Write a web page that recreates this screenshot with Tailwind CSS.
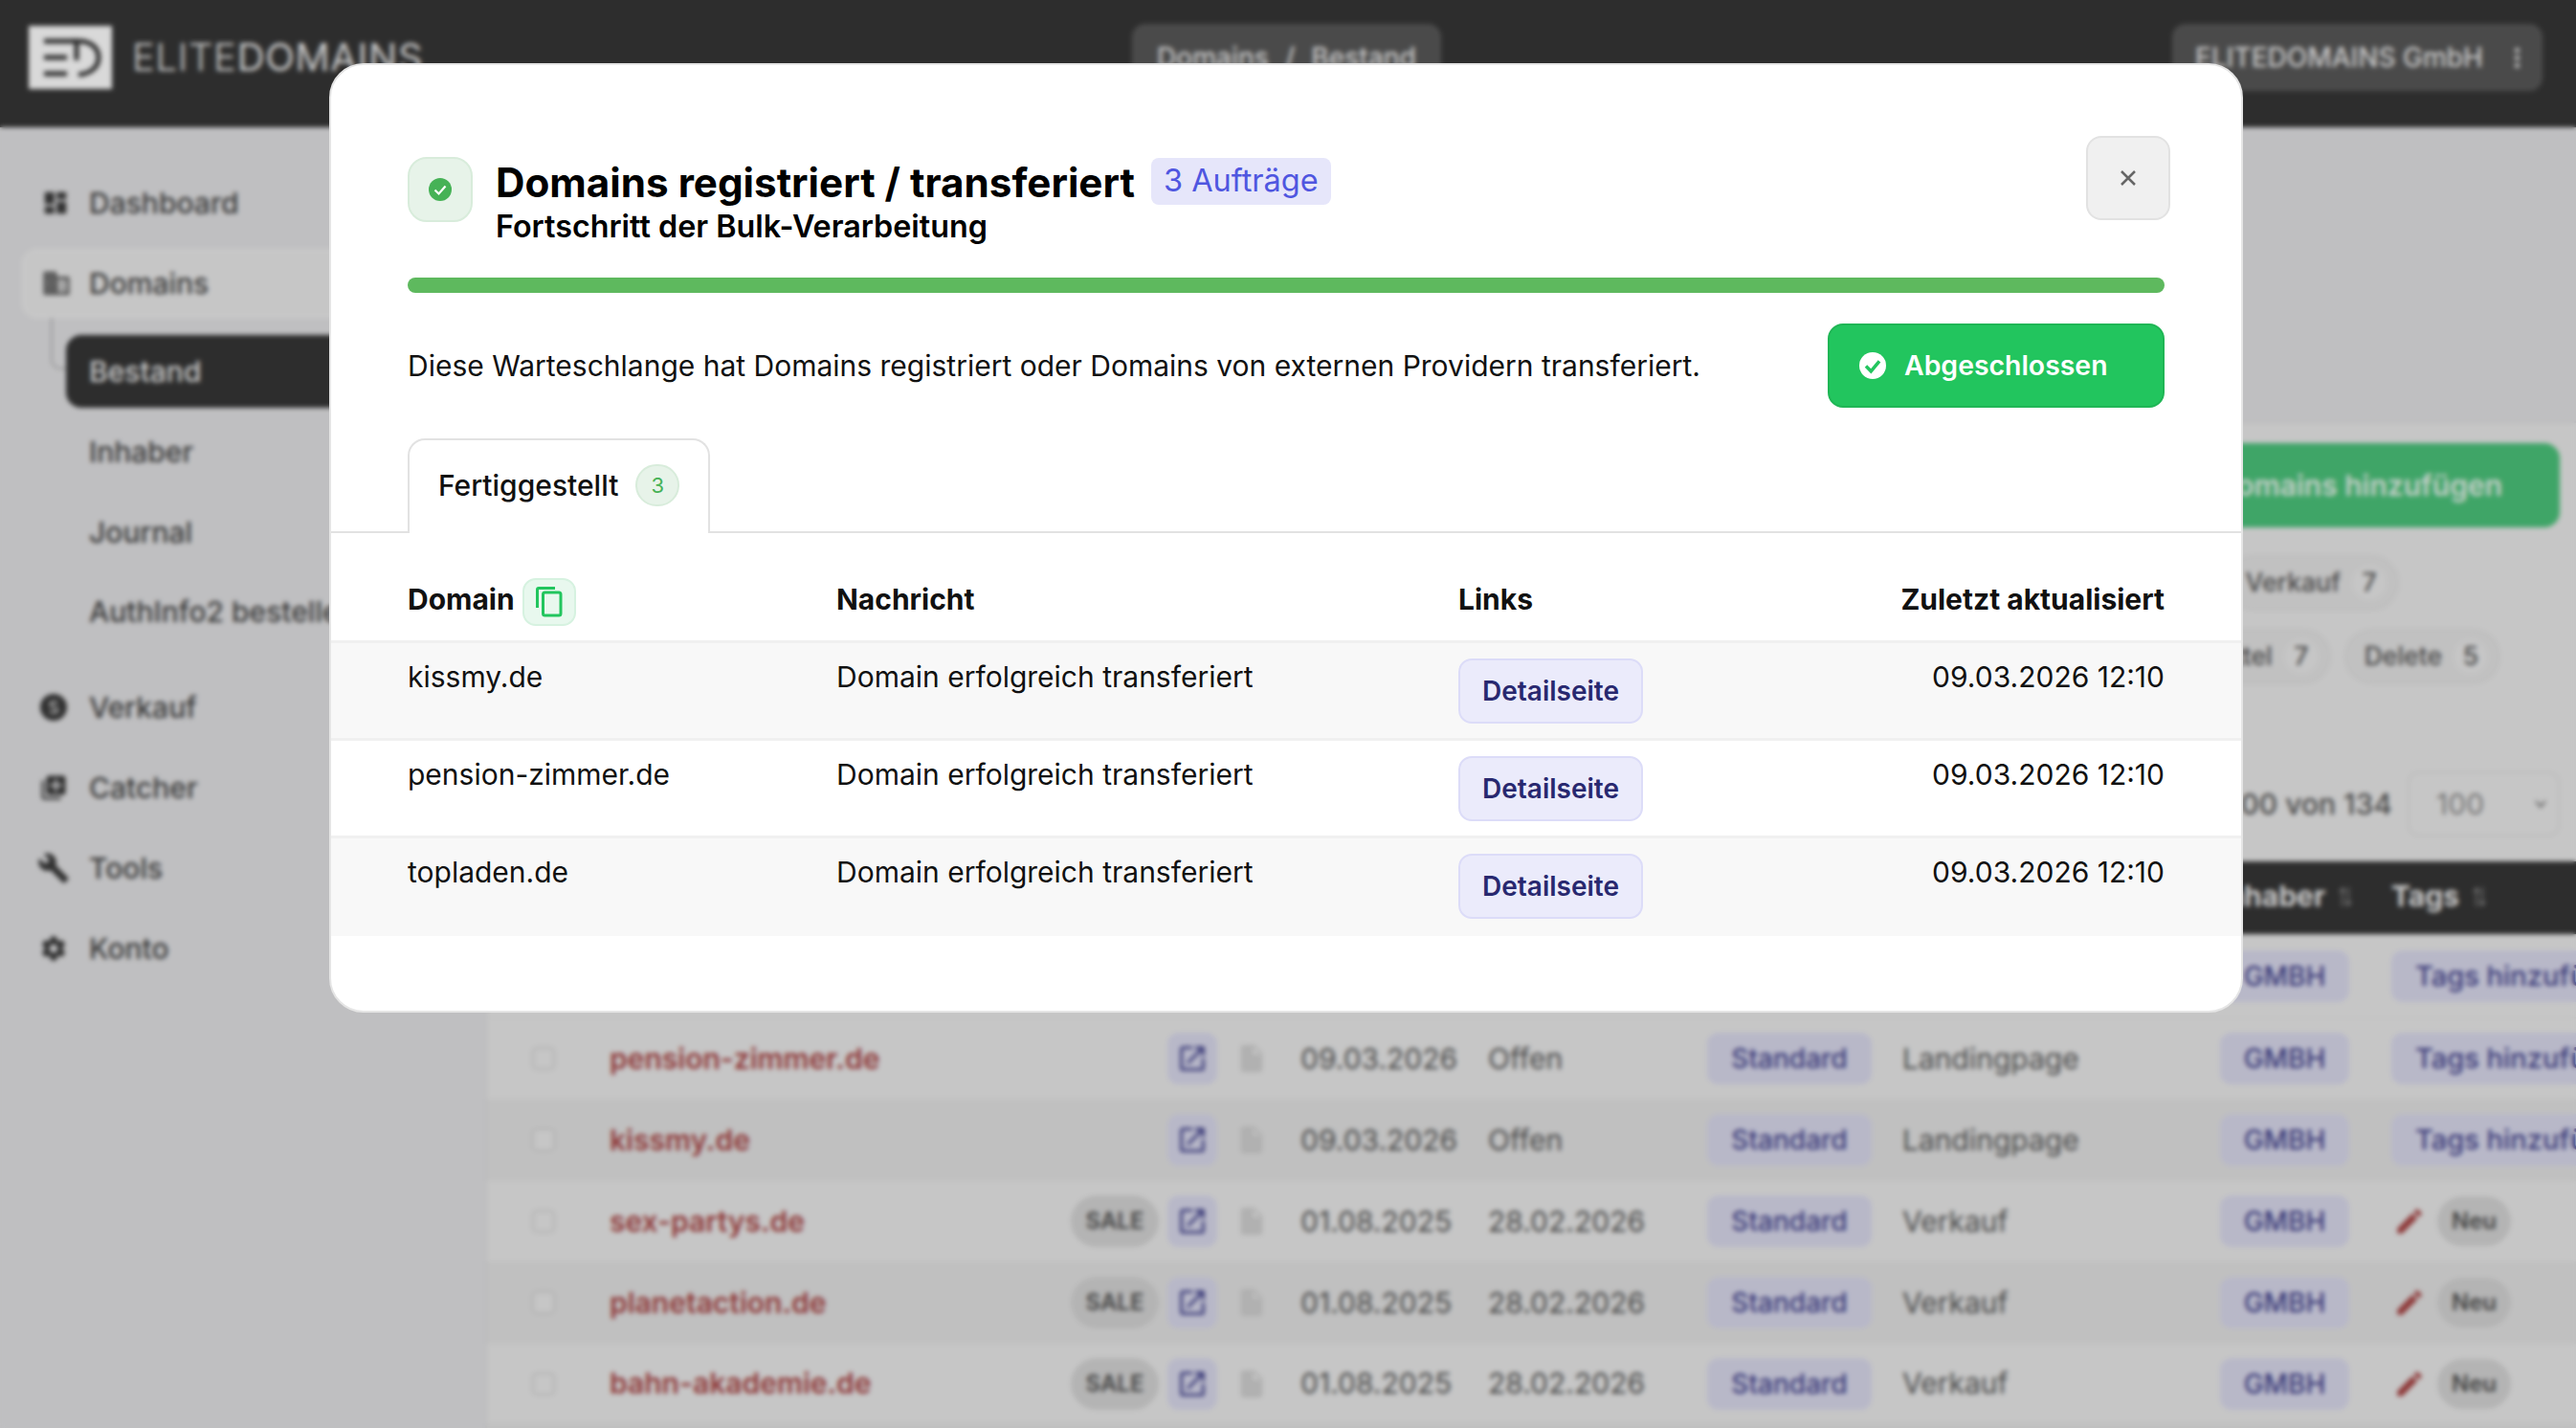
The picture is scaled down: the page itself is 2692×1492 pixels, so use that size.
<!DOCTYPE html>
<html lang="de">
  <head>
    <meta charset="UTF-8" />
    <meta name="viewport" content="width=device-width, initial-scale=1.0" />
    <script src="https://cdn.jsdelivr.net/npm/@tailwindcss/browser@4"></script>
    <title>Domains Bestand</title>
  </head>
  <body class="h-[1492px] overflow-hidden bg-[#e1e1e3] font-[Inter,sans-serif] text-[#111]">
    <!-- Kopfzeile -->
    <header class="flex h-[133px] items-center bg-[#363636] pr-[35px] pb-[13px] pl-[30px]">
      <a href="#" class="flex w-[1153px] items-center gap-[21px]">
        <svg class="h-[66px] w-[87px]" viewBox="0 0 87 66">
          <rect width="87" height="66" fill="#ffffff" />
          <path d="M16 16H50M16 33H40M16 50H40" stroke="#363636" stroke-width="5" fill="none" />
          <path d="M46 16H52C66 16 73 24 73 33C73 42 66 50 52 51M50 16V36" stroke="#363636" stroke-width="5" fill="none" />
        </svg>
        <span class="text-[40px] leading-none tracking-[0.7px] text-[#ececec]"><span class="font-light">ELITE</span><span class="font-normal">DOMAINS</span></span>
      </a>
      <div class="flex h-[70px] w-[323px] items-center justify-center gap-[17px] rounded-[14px] bg-[#585858] text-[28px] font-medium text-[#ebebeb]"><span>Domains</span><span>/</span><span>Bestand</span></div>
      <div class="ml-auto flex h-[70px] w-[387px] items-center justify-between rounded-[14px] bg-[#585858] pr-[24px] pl-[24px] text-[28px] font-medium text-[#ebebeb]">
        ELITEDOMAINS GmbH
        <span class="flex flex-col gap-[3px]">
          <i class="block size-[5px] rounded-full bg-[#ebebeb]"></i>
          <i class="block size-[5px] rounded-full bg-[#ebebeb]"></i>
          <i class="block size-[5px] rounded-full bg-[#ebebeb]"></i>
        </span>
      </div>
    </header>

    <div class="flex h-[1359px]">
      <!-- Seitenleiste -->
      <aside class="w-[509px] shrink-0 border-r-2 border-[#dcdcde] pt-[56px] pl-[23px] text-[30px] font-medium text-[#444]">
        <a class="flex h-[46px] items-center gap-[20px] pl-[20px]">
          <svg class="size-[30px] fill-[#3a3a3a]" viewBox="0 0 24 24"><path d="M13,3V9H21V3M13,21H21V11H13M3,21H11V15H3M3,13H11V3H3V13Z" /></svg>
          Dashboard
        </a>
        <a class="mt-[25px] flex h-[72px] items-center gap-[18px] rounded-[16px] border-2 border-[#efefef] bg-[#e9e9e9] pl-[18px]">
          <svg class="size-[32px] fill-[#4a4a4a]" viewBox="0 0 24 24"><path d="M18,15H16V17H18M18,11H16V13H18M20,19H12V17H14V15H12V13H14V11H12V9H20M10,7H8V5H10M10,11H8V9H10M10,15H8V13H10M10,19H8V17H10M6,7H4V5H6M6,11H4V9H6M6,15H4V13H6M6,19H4V17H6M12,7V3H2V21H22V7H12Z" /></svg>
          Domains
        </a>
        <div class="relative mt-[18px] ml-[46px]">
          <span class="absolute top-[-18px] left-[-16px] h-[54px] w-[16px] rounded-bl-[10px] border-b-2 border-l-2 border-[#b5b5b7]"></span>
          <a class="flex h-[76px] items-center rounded-[16px] bg-[#363636] pl-[24px] text-[#ebebeb]">Bestand</a>
          <a class="mt-[22px] block h-[48px] pl-[24px] leading-[48px]">Inhaber</a>
          <a class="mt-[36px] block h-[48px] pl-[24px] leading-[48px]">Journal</a>
          <a class="mt-[35px] block h-[48px] pl-[24px] whitespace-nowrap leading-[48px]">AuthInfo2 bestellen</a>
        </div>
        <a class="mt-[52px] flex h-[48px] items-center gap-[23px] pl-[19px]">
          <svg class="size-[28px]" viewBox="0 0 24 24"><circle cx="12" cy="12" r="12" fill="#3a3a3a" /><path d="M15.500 8.500C14.500 7 9 6.500 9 9.500C9 12.500 15.500 11.500 15.500 14.500C15.500 17.500 10 17 8.500 15.500" fill="none" stroke="#c4c4c4" stroke-width="2" /></svg>
          Verkauf
        </a>
        <a class="mt-[36px] flex h-[48px] items-center gap-[22px] pl-[18px]">
          <svg class="size-[30px] fill-[#3a3a3a]" viewBox="0 0 24 24"><path d="M4 6H2v14c0 1.100.9 2 2 2h14v-2H4V6zm16-4H8c-1.100 0-2 .9-2 2v12c0 1.100.9 2 2 2h12c1.100 0 2-.9 2-2V4c0-1.100-.9-2-2-2zm-1 9h-4v4h-2v-4H9V9h4V5h2v4h4v2z" /></svg>
          Catcher
        </a>
        <a class="mt-[36px] flex h-[48px] items-center gap-[20px] pl-[16px]">
          <svg class="size-[34px] fill-[#3a3a3a]" viewBox="0 0 24 24"><path d="M22.700 19l-9.100-9.100c.9-2.300.4-5-1.500-6.900-2-2-5-2.400-7.400-1.300L9 6 6 9 1.600 4.700C.4 7.100.9 10.100 2.900 12.100c1.900 1.900 4.600 2.400 6.900 1.500l9.100 9.100c.4.4 1 .4 1.400 0l2.300-2.300c.5-.4.5-1.100.1-1.400z" /></svg>
          Tools
        </a>
        <a class="mt-[36px] flex h-[48px] items-center gap-[22px] pl-[18px]">
          <svg class="size-[30px] fill-[#3a3a3a]" viewBox="0 0 24 24"><path d="M12,15.500A3.500,3.500 0 0,1 8.500,12A3.500,3.500 0 0,1 12,8.500A3.500,3.500 0 0,1 15.500,12A3.500,3.500 0 0,1 12,15.500M19.430,12.970C19.470,12.650 19.500,12.330 19.500,12C19.500,11.670 19.470,11.340 19.430,11L21.540,9.370C21.730,9.220 21.780,8.950 21.660,8.730L19.660,5.270C19.540,5.050 19.270,4.960 19.050,5.050L16.560,6.050C16.040,5.660 15.500,5.320 14.870,5.070L14.500,2.420C14.460,2.180 14.250,2 14,2H10C9.750,2 9.540,2.180 9.500,2.420L9.130,5.070C8.500,5.320 7.960,5.660 7.440,6.050L4.950,5.050C4.730,4.960 4.460,5.050 4.340,5.270L2.340,8.730C2.210,8.950 2.270,9.220 2.460,9.370L4.570,11C4.530,11.340 4.500,11.670 4.500,12C4.500,12.330 4.530,12.650 4.570,12.970L2.460,14.630C2.270,14.780 2.210,15.050 2.340,15.270L4.340,18.730C4.460,18.950 4.730,19.030 4.950,18.950L7.440,17.940C7.960,18.340 8.500,18.680 9.130,18.930L9.500,21.580C9.540,21.820 9.750,22 10,22H14C14.250,22 14.460,21.820 14.500,21.580L14.870,18.930C15.500,18.670 16.040,18.340 16.560,17.940L19.050,18.950C19.270,19.030 19.540,18.950 19.660,18.730L21.660,15.270C21.780,15.050 21.730,14.780 21.540,14.630L19.430,12.970Z" /></svg>
          Konto
        </a>
      </aside>

      <!-- Inhalt -->
      <main class="flex min-w-0 flex-1 flex-col pt-[307px]">
        <div class="flex flex-1 flex-col border-t-2 border-[#dcdcde] bg-[#e9e9e9] text-[30px]">
          <div class="flex flex-col items-end pt-[21px] pr-[17px]">
            <button class="flex h-[88px] w-[520px] items-center justify-end rounded-[16px] bg-[#4bc27a] pr-[60px] text-[30px] font-semibold text-[#eaf5ee]">Domains hinzufügen</button>
            <div class="mt-[29px] mr-[168px] flex h-[58px] items-center gap-[12px] rounded-full border-2 border-[#dedede] bg-[#e3e3e3] pr-[11px] pl-[19px] text-[26.500px] font-medium text-[#555]">
              Verkauf <span class="flex size-[36px] items-center justify-center rounded-full bg-[#e9e9e9]">7</span>
            </div>
            <div class="mt-[19px] mr-[62px] flex items-center gap-[14px] text-[26.500px] font-medium text-[#555]">
              <div class="flex h-[58px] items-center gap-[12px] rounded-full border-2 border-[#dedede] bg-[#e3e3e3] pr-[11px] pl-[19px]">
                Mittel <span class="flex size-[36px] items-center justify-center rounded-full bg-[#e9e9e9]">7</span>
              </div>
              <div class="flex h-[58px] items-center gap-[12px] rounded-full border-2 border-[#dedede] bg-[#e3e3e3] pr-[11px] pl-[19px]">
                Delete <span class="flex size-[36px] items-center justify-center rounded-full bg-[#e9e9e9]">5</span>
              </div>
            </div>
            <div class="mt-[91px] flex items-center gap-[16px] text-[#555]">
              <span class="font-medium">1 - 100 von 134</span>
              <div class="flex h-[68px] w-[159px] items-center justify-between rounded-[12px] border-2 border-[#dedede] pr-[8px] pl-[28px] text-[#888]">
                100
                <svg class="size-[20px]" viewBox="0 0 20 20"><path d="M5 7l5 6 5-6" fill="none" stroke="#777" stroke-width="2" /></svg>
              </div>
            </div>
          </div>

          <!-- Tabellenkopf -->
          <div class="mt-[26px] grid h-[76px] grid-cols-[47px_81px_583px_77px_61px_197px_229px_204px_332px_179px_1fr] items-center bg-[#363636] pb-[3px] text-[30px] font-bold text-[#ebebeb]">
            <span></span><span></span><span></span><span></span><span></span><span></span><span></span><span></span><span></span>
            <span class="-ml-[2px] flex items-center gap-[14px]">Inhaber
              <svg class="h-[24px] w-[14px]" viewBox="0 0 14 24"><path d="M4 22V4M1 7l3-4 3 4M10 2v18M7 17l3 4 3-4" fill="none" stroke="#8a8a8a" stroke-width="1.500" /></svg>
            </span>
            <span class="flex items-center gap-[14px]">Tags
              <svg class="h-[24px] w-[14px]" viewBox="0 0 14 24"><path d="M4 22V4M1 7l3-4 3 4M10 2v18M7 17l3 4 3-4" fill="none" stroke="#8a8a8a" stroke-width="1.500" /></svg>
            </span>
          </div>

          <div class="grid h-[87px] grid-cols-[47px_81px_583px_77px_61px_197px_229px_204px_332px_179px_1fr] items-center overflow-hidden">
            <span></span><span></span><span></span><span></span><span></span><span></span><span></span><span></span>
            <span></span>
            <span class="flex h-[54px] w-[135px] items-center justify-center rounded-[12px] bg-[#d9d9ec] text-[28px] font-medium text-[#42428c]">GMBH</span>
            <span class="flex h-[54px] items-center rounded-l-[12px] bg-[#d9d9ec] pl-[25px] text-[29px] font-medium whitespace-nowrap text-[#42428c]">Tags hinzufügen</span>
          </div>

          <div class="grid h-[85px] grid-cols-[47px_81px_583px_77px_61px_197px_229px_204px_332px_179px_1fr] items-center overflow-hidden border-t border-[#e2e2e2]">
            <span></span>
            <span class="size-[24px] rounded-[5px] border-2 border-[#d2d2d2] bg-[#e9e9e9]"></span>
            <a class="font-semibold text-[#a84444]">pension-zimmer.de</a>
            <span class="flex h-[54px] w-[52px] items-center justify-center rounded-[12px] bg-[#d9d9ec]"><svg class="size-[34px] fill-[#42428c]" viewBox="0 0 24 24"><path d="M14,3V5H17.590L7.760,14.830L9.170,16.240L19,6.410V10H21V3M19,19H5V5H12V3H5C3.890,3 3,3.900 3,5V19A2,2 0 0,0 5,21H19A2,2 0 0,0 21,19V12H19V19Z" /></svg></span>
            <svg class="-ml-[6px] size-[34px] fill-[#d0d0d0]" viewBox="0 0 24 24"><path d="M13,9V3.500L18.500,9M6,2C4.890,2 4,2.890 4,4V20A2,2 0 0,0 6,22H18A2,2 0 0,0 20,20V8L14,2H6Z" /></svg>
            <span class="pl-[1px] text-[#555]">09.03.2026</span>
            <span class="text-[#555]">Offen</span>
            <span class="flex h-[54px] w-[172px] items-center justify-center rounded-[12px] bg-[#d9d9ec] text-[28px] font-medium text-[#42428c]">Standard</span>
            <span class="text-[#555]">Landingpage</span>
            <span class="flex h-[54px] w-[135px] items-center justify-center rounded-[12px] bg-[#d9d9ec] text-[28px] font-medium text-[#42428c]">GMBH</span>
            <span class="flex h-[54px] items-center rounded-l-[12px] bg-[#d9d9ec] pl-[25px] text-[29px] font-medium whitespace-nowrap text-[#42428c]">Tags hinzufügen</span>
          </div>

          <div class="grid h-[85px] grid-cols-[47px_81px_583px_77px_61px_197px_229px_204px_332px_179px_1fr] items-center overflow-hidden border-t border-[#e2e2e2] bg-[#e2e2e2]">
            <span></span>
            <span class="size-[24px] rounded-[5px] border-2 border-[#d2d2d2] bg-[#e9e9e9]"></span>
            <a class="font-semibold text-[#a84444]">kissmy.de</a>
            <span class="flex h-[54px] w-[52px] items-center justify-center rounded-[12px] bg-[#d9d9ec]"><svg class="size-[34px] fill-[#42428c]" viewBox="0 0 24 24"><path d="M14,3V5H17.590L7.760,14.830L9.170,16.240L19,6.410V10H21V3M19,19H5V5H12V3H5C3.890,3 3,3.900 3,5V19A2,2 0 0,0 5,21H19A2,2 0 0,0 21,19V12H19V19Z" /></svg></span>
            <svg class="-ml-[6px] size-[34px] fill-[#d0d0d0]" viewBox="0 0 24 24"><path d="M13,9V3.500L18.500,9M6,2C4.890,2 4,2.890 4,4V20A2,2 0 0,0 6,22H18A2,2 0 0,0 20,20V8L14,2H6Z" /></svg>
            <span class="pl-[1px] text-[#555]">09.03.2026</span>
            <span class="text-[#555]">Offen</span>
            <span class="flex h-[54px] w-[172px] items-center justify-center rounded-[12px] bg-[#d9d9ec] text-[28px] font-medium text-[#42428c]">Standard</span>
            <span class="text-[#555]">Landingpage</span>
            <span class="flex h-[54px] w-[135px] items-center justify-center rounded-[12px] bg-[#d9d9ec] text-[28px] font-medium text-[#42428c]">GMBH</span>
            <span class="flex h-[54px] items-center rounded-l-[12px] bg-[#d9d9ec] pl-[25px] text-[29px] font-medium whitespace-nowrap text-[#42428c]">Tags hinzufügen</span>
          </div>

          <div class="grid h-[85px] grid-cols-[47px_81px_583px_77px_61px_197px_229px_204px_332px_179px_1fr] items-center overflow-hidden border-t border-[#e2e2e2]">
            <span></span>
            <span class="size-[24px] rounded-[5px] border-2 border-[#d2d2d2] bg-[#e9e9e9]"></span>
            <span class="flex items-center justify-between pr-[9px]">
              <a class="font-semibold text-[#a84444]">sex-partys.de</a>
              <span class="flex h-[54px] w-[92px] items-center justify-center rounded-full bg-[#d4d4d4] text-[24px] font-semibold text-[#4f4f4f]">SALE</span>
            </span>
            <span class="flex h-[54px] w-[52px] items-center justify-center rounded-[12px] bg-[#d9d9ec]"><svg class="size-[34px] fill-[#42428c]" viewBox="0 0 24 24"><path d="M14,3V5H17.590L7.760,14.830L9.170,16.240L19,6.410V10H21V3M19,19H5V5H12V3H5C3.890,3 3,3.900 3,5V19A2,2 0 0,0 5,21H19A2,2 0 0,0 21,19V12H19V19Z" /></svg></span>
            <svg class="-ml-[6px] size-[34px] fill-[#d0d0d0]" viewBox="0 0 24 24"><path d="M13,9V3.500L18.500,9M6,2C4.890,2 4,2.890 4,4V20A2,2 0 0,0 6,22H18A2,2 0 0,0 20,20V8L14,2H6Z" /></svg>
            <span class="pl-[1px] text-[#555]">01.08.2025</span>
            <span class="text-[#555]">28.02.2026</span>
            <span class="flex h-[54px] w-[172px] items-center justify-center rounded-[12px] bg-[#d9d9ec] text-[28px] font-medium text-[#42428c]">Standard</span>
            <span class="text-[#555]">Verkauf</span>
            <span class="flex h-[54px] w-[135px] items-center justify-center rounded-[12px] bg-[#d9d9ec] text-[28px] font-medium text-[#42428c]">GMBH</span>
            <span class="flex items-center gap-[12px] pl-[2px]">
              <svg class="size-[34px] fill-[#a84444]" viewBox="0 0 24 24"><path d="M20.710,7.040C21.100,6.650 21.100,6 20.710,5.630L18.370,3.290C18,2.900 17.350,2.900 16.960,3.290L15.120,5.120L18.870,8.870M3,17.250V21H6.750L17.810,9.930L14.060,6.180L3,17.250Z" /></svg>
              <span class="flex h-[52px] w-[77px] items-center justify-center rounded-full bg-[#d4d4d4] text-[24px] font-semibold text-[#4f4f4f]">Neu</span>
            </span>
          </div>

          <div class="grid h-[85px] grid-cols-[47px_81px_583px_77px_61px_197px_229px_204px_332px_179px_1fr] items-center overflow-hidden border-t border-[#e2e2e2] bg-[#e2e2e2]">
            <span></span>
            <span class="size-[24px] rounded-[5px] border-2 border-[#d2d2d2] bg-[#e9e9e9]"></span>
            <span class="flex items-center justify-between pr-[9px]">
              <a class="font-semibold text-[#a84444]">planetaction.de</a>
              <span class="flex h-[54px] w-[92px] items-center justify-center rounded-full bg-[#d4d4d4] text-[24px] font-semibold text-[#4f4f4f]">SALE</span>
            </span>
            <span class="flex h-[54px] w-[52px] items-center justify-center rounded-[12px] bg-[#d9d9ec]"><svg class="size-[34px] fill-[#42428c]" viewBox="0 0 24 24"><path d="M14,3V5H17.590L7.760,14.830L9.170,16.240L19,6.410V10H21V3M19,19H5V5H12V3H5C3.890,3 3,3.900 3,5V19A2,2 0 0,0 5,21H19A2,2 0 0,0 21,19V12H19V19Z" /></svg></span>
            <svg class="-ml-[6px] size-[34px] fill-[#d0d0d0]" viewBox="0 0 24 24"><path d="M13,9V3.500L18.500,9M6,2C4.890,2 4,2.890 4,4V20A2,2 0 0,0 6,22H18A2,2 0 0,0 20,20V8L14,2H6Z" /></svg>
            <span class="pl-[1px] text-[#555]">01.08.2025</span>
            <span class="text-[#555]">28.02.2026</span>
            <span class="flex h-[54px] w-[172px] items-center justify-center rounded-[12px] bg-[#d9d9ec] text-[28px] font-medium text-[#42428c]">Standard</span>
            <span class="text-[#555]">Verkauf</span>
            <span class="flex h-[54px] w-[135px] items-center justify-center rounded-[12px] bg-[#d9d9ec] text-[28px] font-medium text-[#42428c]">GMBH</span>
            <span class="flex items-center gap-[12px] pl-[2px]">
              <svg class="size-[34px] fill-[#a84444]" viewBox="0 0 24 24"><path d="M20.710,7.040C21.100,6.650 21.100,6 20.710,5.630L18.370,3.290C18,2.900 17.350,2.900 16.960,3.290L15.120,5.120L18.870,8.870M3,17.250V21H6.750L17.810,9.930L14.060,6.180L3,17.250Z" /></svg>
              <span class="flex h-[52px] w-[77px] items-center justify-center rounded-full bg-[#d4d4d4] text-[24px] font-semibold text-[#4f4f4f]">Neu</span>
            </span>
          </div>

          <div class="grid h-[84px] grid-cols-[47px_81px_583px_77px_61px_197px_229px_204px_332px_179px_1fr] items-center overflow-hidden border-t border-[#e2e2e2]">
            <span></span>
            <span class="size-[24px] rounded-[5px] border-2 border-[#d2d2d2] bg-[#e9e9e9]"></span>
            <span class="flex items-center justify-between pr-[9px]">
              <a class="font-semibold text-[#a84444]">bahn-akademie.de</a>
              <span class="flex h-[54px] w-[92px] items-center justify-center rounded-full bg-[#d4d4d4] text-[24px] font-semibold text-[#4f4f4f]">SALE</span>
            </span>
            <span class="flex h-[54px] w-[52px] items-center justify-center rounded-[12px] bg-[#d9d9ec]"><svg class="size-[34px] fill-[#42428c]" viewBox="0 0 24 24"><path d="M14,3V5H17.590L7.760,14.830L9.170,16.240L19,6.410V10H21V3M19,19H5V5H12V3H5C3.890,3 3,3.900 3,5V19A2,2 0 0,0 5,21H19A2,2 0 0,0 21,19V12H19V19Z" /></svg></span>
            <svg class="-ml-[6px] size-[34px] fill-[#d0d0d0]" viewBox="0 0 24 24"><path d="M13,9V3.500L18.500,9M6,2C4.890,2 4,2.890 4,4V20A2,2 0 0,0 6,22H18A2,2 0 0,0 20,20V8L14,2H6Z" /></svg>
            <span class="pl-[1px] text-[#555]">01.08.2025</span>
            <span class="text-[#555]">28.02.2026</span>
            <span class="flex h-[54px] w-[172px] items-center justify-center rounded-[12px] bg-[#d9d9ec] text-[28px] font-medium text-[#42428c]">Standard</span>
            <span class="text-[#555]">Verkauf</span>
            <span class="flex h-[54px] w-[135px] items-center justify-center rounded-[12px] bg-[#d9d9ec] text-[28px] font-medium text-[#42428c]">GMBH</span>
            <span class="flex items-center gap-[12px] pl-[2px]">
              <svg class="size-[34px] fill-[#a84444]" viewBox="0 0 24 24"><path d="M20.710,7.040C21.100,6.650 21.100,6 20.710,5.630L18.370,3.290C18,2.900 17.350,2.900 16.960,3.290L15.120,5.120L18.870,8.870M3,17.250V21H6.750L17.810,9.930L14.060,6.180L3,17.250Z" /></svg>
              <span class="flex h-[52px] w-[77px] items-center justify-center rounded-full bg-[#d4d4d4] text-[24px] font-semibold text-[#4f4f4f]">Neu</span>
            </span>
          </div>

          <div class="flex-1 border-t border-[#e2e2e2] bg-[#e2e2e2]"></div>
        </div>
      </main>
    </div>

    <!-- Dialog -->
    <div class="fixed inset-0 flex items-start justify-center bg-black/15 pt-[66px] pr-[4px] backdrop-blur-[2.5px]">
      <div class="h-[992px] w-[2000px] overflow-hidden rounded-[36px] border-2 border-[#e5e5e5] bg-white">
        <div class="px-[80px] pt-[74px]">
          <div class="flex h-[88px] items-start justify-between">
            <div class="mt-[22px] flex gap-[24px]">
              <span class="flex size-[68px] items-center justify-center rounded-[20px] border-2 border-[#d8ecdb] bg-[#e7f3e9]">
                <svg class="size-[24px]" viewBox="0 0 24 24"><circle cx="12" cy="12" r="12" fill="#46b256" /><path d="M6.500 12.500L10.500 16.500L17.500 8.500" fill="none" stroke="#fff" stroke-width="2.200" /></svg>
              </span>
              <div class="-mt-[1px]">
                <div class="flex items-center gap-[17px]">
                  <h1 class="text-[42.200px] leading-[56px] font-bold text-black">Domains registriert / transferiert</h1>
                  <span class="mb-[4px] flex h-[49px] items-center rounded-[8px] bg-[#e6e6fa] px-[13px] text-[32.500px] text-[#4f56e0]">3 Aufträge</span>
                </div>
                <p class="text-[32.300px] leading-[36px] font-semibold text-black">Fortschritt der Bulk-Verarbeitung</p>
              </div>
            </div>
            <button class="-mr-[6px] flex size-[88px] items-center justify-center rounded-[16px] border-2 border-[#e2e2e2] bg-[#f0f0f0]">
              <svg class="size-[18px]" viewBox="0 0 18 18"><path d="M2 2L16 16M16 2L2 16" stroke="#666" stroke-width="2.500" /></svg>
            </button>
          </div>

          <div class="mt-[60px] h-[16px] rounded-[8px] bg-[#5eb95e]"></div>

          <div class="mt-[32px] flex items-center justify-between">
            <p class="text-[30px]">Diese Warteschlange hat Domains registriert oder Domains von externen Providern transferiert.</p>
            <span class="flex h-[88px] w-[352px] items-center gap-[19px] rounded-[16px] border-2 border-[#1fb655] bg-[#22c55e] pl-[31px] text-[28.400px] font-semibold text-white">
              <svg class="size-[28px]" viewBox="0 0 24 24"><circle cx="12" cy="12" r="12" fill="#fff" /><path d="M6 12.500L10.500 17L18 8" fill="none" stroke="#22c55e" stroke-width="3" /></svg>
              Abgeschlossen
            </span>
          </div>
        </div>

        <div class="mt-[32px] border-b-2 border-[#e2e2e2] px-[80px]">
          <div class="-mb-[2px] flex h-[99px] w-[316px] items-center gap-[18px] rounded-t-[18px] border-2 border-b-0 border-[#e2e2e2] bg-white pb-[3px] pl-[30px] text-[30px] font-medium">
            Fertiggestellt
            <span class="flex h-[44px] w-[46px] items-center justify-center rounded-full border-2 border-[#d8ecdb] bg-[#e7f3e9] text-[22px] font-normal text-[#46b256]">3</span>
          </div>
        </div>

        <div class="grid h-[115px] grid-cols-[448px_650px_299px_1fr] items-end border-b-[3px] border-[#f0f0f0] px-[80px] pb-[20px] text-[30px] font-bold">
          <span class="flex h-[45px] items-center gap-[8px]">Domain
            <button class="mt-[5px] flex h-[50px] w-[56px] items-center justify-center rounded-[14px] border-2 border-[#d6f2e0] bg-[#e8f8ee]">
              <svg class="h-[32px] w-[28px]" viewBox="0 0 28 32"><path d="M1.500 22V3C1.500 2 1.500 1.500 3 1.500H20" fill="none" stroke="#22c55e" stroke-width="3" /><rect x="7.500" y="6" width="18.500" height="24" rx="2" fill="none" stroke="#22c55e" stroke-width="3" /></svg>
            </button>
          </span>
          <span>Nachricht</span>
          <span>Links</span>
          <span class="text-right">Zuletzt aktualisiert</span>
        </div>

        <div class="grid h-[102px] grid-cols-[448px_650px_299px_1fr] items-start border-b-[3px] border-[#f0f0f0] bg-[#f8f8f8] px-[80px] text-[30px]">
          <span class="pt-[13px]">kissmy.de</span>
          <span class="pt-[13px]">Domain erfolgreich transferiert</span>
          <span class="pt-[16px]"><a class="flex h-[68px] w-[193px] items-center justify-center rounded-[14px] border-2 border-[#dcdcf8] bg-[#ebebfb] text-[28px] font-semibold text-[#28286f]">Detailseite</a></span>
          <span class="pt-[13px] text-right">09.03.2026 12:10</span>
        </div>
        <div class="grid h-[102px] grid-cols-[448px_650px_299px_1fr] items-start border-b-[3px] border-[#f0f0f0] px-[80px] text-[30px]">
          <span class="pt-[13px]">pension-zimmer.de</span>
          <span class="pt-[13px]">Domain erfolgreich transferiert</span>
          <span class="pt-[16px]"><a class="flex h-[68px] w-[193px] items-center justify-center rounded-[14px] border-2 border-[#dcdcf8] bg-[#ebebfb] text-[28px] font-semibold text-[#28286f]">Detailseite</a></span>
          <span class="pt-[13px] text-right">09.03.2026 12:10</span>
        </div>
        <div class="grid h-[102px] grid-cols-[448px_650px_299px_1fr] items-start bg-[#f8f8f8] px-[80px] text-[30px]">
          <span class="pt-[13px]">topladen.de</span>
          <span class="pt-[13px]">Domain erfolgreich transferiert</span>
          <span class="pt-[16px]"><a class="flex h-[68px] w-[193px] items-center justify-center rounded-[14px] border-2 border-[#dcdcf8] bg-[#ebebfb] text-[28px] font-semibold text-[#28286f]">Detailseite</a></span>
          <span class="pt-[13px] text-right">09.03.2026 12:10</span>
        </div>
      </div>
    </div>
  </body>
</html>
